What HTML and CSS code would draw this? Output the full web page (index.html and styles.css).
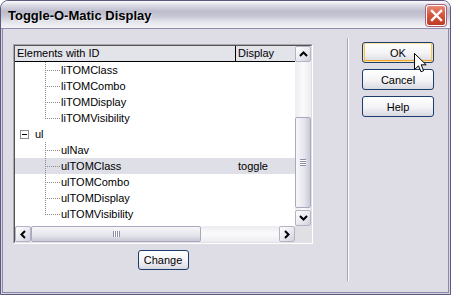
FILE: index.html
```html
<!DOCTYPE html>
<html lang="en">
<head>
    <meta charset="UTF-8">
    <title>Toggle-O-Matic Display</title>
    <link rel="stylesheet" href="styles.css">
</head>
<body>
    <div class="window">
        <div class="titlebar">
            <span class="title">Toggle-O-Matic Display</span>
            <div class="close">
                <svg width="13" height="13" viewBox="0 0 13 13"><path d="M2 2 L11 11 M11 2 L2 11" stroke="#fff" stroke-width="2.4" stroke-linecap="square"/></svg>
            </div>
        </div>
        <div class="client">
            <div class="main">
                <div class="listbox">
                    <div class="inner">
                        <div class="view">
                            <div class="header">
                                <div class="col-name">Elements with ID</div>
                                <div class="col-display">Display</div>
                            </div>
                            <div class="row"><div class="name"><span class="twig"></span>liTOMClass</div><div class="value"></div></div>
                            <div class="row"><div class="name"><span class="twig"></span>liTOMCombo</div><div class="value"></div></div>
                            <div class="row"><div class="name"><span class="twig"></span>liTOMDisplay</div><div class="value"></div></div>
                            <div class="row"><div class="name"><span class="twig last"></span>liTOMVisibility</div><div class="value"></div></div>
                            <div class="row"><div class="name"><span class="expander"><span class="minus"></span></span>ul</div><div class="value"></div></div>
                            <div class="row"><div class="name"><span class="twig"></span>ulNav</div><div class="value"></div></div>
                            <div class="row selected"><div class="name"><span class="twig"></span>ulTOMClass</div><div class="value">toggle</div></div>
                            <div class="row"><div class="name"><span class="twig"></span>ulTOMCombo</div><div class="value"></div></div>
                            <div class="row"><div class="name"><span class="twig"></span>ulTOMDisplay</div><div class="value"></div></div>
                            <div class="row"><div class="name"><span class="twig last"></span>ulTOMVisibility</div><div class="value"></div></div>
                        </div>
                        <div class="vscroll">
                            <div class="arrow"><svg width="9" height="6" viewBox="0 0 9 6"><path d="M1 5 L4.5 1.5 L8 5" fill="none" stroke="#000" stroke-width="2"/></svg></div>
                            <div class="vtrack">
                                <div class="vthumb"><span class="grip"></span></div>
                            </div>
                            <div class="arrow"><svg width="9" height="6" viewBox="0 0 9 6"><path d="M1 1 L4.5 4.5 L8 1" fill="none" stroke="#000" stroke-width="2"/></svg></div>
                        </div>
                        <div class="hscroll">
                            <div class="arrow"><svg width="6" height="9" viewBox="0 0 6 9"><path d="M5 1 L1.5 4.5 L5 8" fill="none" stroke="#000" stroke-width="2"/></svg></div>
                            <div class="hthumb"><span class="grip"></span></div>
                            <div class="arrow right"><svg width="6" height="9" viewBox="0 0 6 9"><path d="M1 1 L4.5 4.5 L1 8" fill="none" stroke="#000" stroke-width="2"/></svg></div>
                        </div>
                        <div class="corner"></div>
                    </div>
                </div>
                <button class="btn change">Change</button>
            </div>
            <div class="sep"></div>
            <div class="actions">
                <button class="btn hot">OK</button>
                <button class="btn">Cancel</button>
                <button class="btn">Help</button>
            </div>
        </div>
        <svg class="cursor" width="14" height="21" viewBox="0 0 14 21"><path d="M0.5 0.5 L0.5 16.5 L4.5 12.8 L7 18.8 L9.6 17.7 L7.2 11.8 L12.2 11.8 Z" fill="#fff" stroke="#000" stroke-width="1"/></svg>
    </div>
</body>
</html>
```

FILE: styles.css
```css
* {
    box-sizing: border-box;
}
body {
    margin: 0;
    font-family: "Liberation Sans", Arial, sans-serif;
    font-size: 11px;
    color: #000;
    background: #fff;
}
.window {
    position: relative;
    width: 451px;
    height: 295px;
    display: flex;
    flex-direction: column;
    border: 1px solid #5b5a7e;
    border-radius: 8px 8px 0 0;
    background: #d6d6e2;
    overflow: hidden;
}
.titlebar {
    height: 28px;
    flex-shrink: 0;
    display: flex;
    align-items: center;
    justify-content: space-between;
    padding: 2px 4px 0 7px;
    border-bottom: 1px solid #8d8cab;
    background: linear-gradient(#fbfbfd 0%, #e2e2ea 12%, #bcbccd 38%, #c6c6d4 55%, #e4e4ec 78%, #f4f4f7 100%);
}
.title {
    font-weight: bold;
    font-size: 13px;
    color: #000;
    text-shadow: 1px 1px 0 rgba(255, 255, 255, 0.5);
}
.close {
    width: 20px;
    height: 21px;
    display: flex;
    align-items: center;
    justify-content: center;
    border: 1px solid #fff;
    border-radius: 3px;
    background: linear-gradient(#e98a76, #d4533b 50%, #c03a24);
    box-shadow: 0 0 0 1px #a9607a;
}
.client {
    flex: 1;
    display: flex;
    margin: 0 1px 1px;
    border: 1px solid #8a89a8;
    border-top: none;
    background: #dedde5;
}
.main {
    display: flex;
    flex-direction: column;
    align-items: center;
    padding: 15px 0 0 10px;
}
.listbox {
    width: 300px;
    height: 200px;
    border: 1px solid;
    border-color: #a7a6aa #fff #fff #a7a6aa;
}
.inner {
    height: 100%;
    display: grid;
    grid-template-columns: 1fr 16px;
    grid-template-rows: 1fr 16px;
    border: 1px solid;
    border-color: #555 #e0dfe3 #e0dfe3 #555;
    background: #fff;
}
.view {
    overflow: hidden;
}
.header {
    display: grid;
    grid-template-columns: 221px 1fr;
    height: 16px;
    border-bottom: 1px solid #000;
    background: #e3e3ea;
}
.header div {
    padding-left: 2px;
    line-height: 15px;
}
.header .col-name {
    border-right: 1px solid #000;
}
.row {
    display: grid;
    grid-template-columns: 221px 1fr;
    height: 16px;
    align-items: center;
}
.row.selected {
    background: #dfdfe7;
}
.row .name {
    display: flex;
    align-items: center;
    height: 16px;
}
.row .value {
    padding-left: 2px;
}
.twig {
    width: 15px;
    height: 16px;
    margin-left: 30px;
    margin-right: 1px;
    background:
        repeating-linear-gradient(to bottom, #8a8a8a 0 1px, transparent 1px 2px) 0 0 / 1px 100% no-repeat,
        repeating-linear-gradient(to right, #8a8a8a 0 1px, transparent 1px 2px) 2px 8px / 13px 1px no-repeat;
}
.twig.last {
    background:
        repeating-linear-gradient(to bottom, #8a8a8a 0 1px, transparent 1px 2px) 0 0 / 1px 9px no-repeat,
        repeating-linear-gradient(to right, #8a8a8a 0 1px, transparent 1px 2px) 2px 8px / 13px 1px no-repeat;
}
.expander {
    width: 9px;
    height: 9px;
    margin-left: 5px;
    margin-right: 6px;
    display: flex;
    align-items: center;
    justify-content: center;
    border: 1px solid #8c8c8c;
    background: #fff;
}
.minus {
    width: 5px;
    height: 1px;
    background: #000;
}
.vscroll {
    display: flex;
    flex-direction: column;
    background: linear-gradient(to right, #ececf1, #fbfbfc 50%, #ececf1);
}
.vtrack {
    flex: 1;
}
.arrow {
    width: 16px;
    height: 16px;
    flex-shrink: 0;
    display: flex;
    align-items: center;
    justify-content: center;
    border: 1px solid #b3b3c4;
    border-radius: 2px;
    background: linear-gradient(135deg, #ffffff, #e6e6ee 60%, #cfcfdc);
}
.vthumb {
    height: 91px;
    margin-top: 55px;
    display: flex;
    align-items: center;
    justify-content: center;
    border: 1px solid #a9a9bd;
    border-radius: 2px;
    background: linear-gradient(to right, #f7f7fa, #e4e4ec 60%, #c9c9d7);
}
.vthumb .grip {
    width: 6px;
    height: 7px;
    background: repeating-linear-gradient(to bottom, #8d8da3 0 1px, #fff 1px 2px);
}
.hscroll {
    display: flex;
    background: linear-gradient(#ececf1, #fbfbfc 50%, #ececf1);
}
.hthumb {
    width: 170px;
    display: flex;
    align-items: center;
    justify-content: center;
    border: 1px solid #a9a9bd;
    border-radius: 2px;
    background: linear-gradient(#f7f7fa, #e4e4ec 60%, #c9c9d7);
}
.hthumb .grip {
    width: 7px;
    height: 6px;
    background: repeating-linear-gradient(to right, #8d8da3 0 1px, #fff 1px 2px);
}
.arrow.right {
    margin-left: auto;
}
.corner {
    background: #e0dfe3;
}
.btn {
    font-family: "Liberation Sans", Arial, sans-serif;
    font-size: 11px;
    color: #000;
    padding: 0;
    border: 1px solid #1c3d6b;
    border-radius: 3px;
    background: linear-gradient(#ffffff, #f3f3f6 55%, #d8d8e2);
}
.change {
    width: 51px;
    height: 20px;
    margin-top: 6px;
}
.sep {
    width: 2px;
    margin: 9px 0 11px 34px;
    border-left: 1px solid #a7a6aa;
    border-right: 1px solid #fff;
}
.actions {
    display: flex;
    flex-direction: column;
    gap: 6px;
    padding-top: 13px;
    margin-left: 13px;
}
.actions .btn {
    width: 72px;
    height: 21px;
}
.btn.hot {
    box-shadow: inset 0 0 0 1px #ffe3a0, inset 0 -2px 0 #f0a531, inset 2px 0 0 #f8c45c, inset -2px 0 0 #f8c45c;
}
.cursor {
    position: absolute;
    left: 413px;
    top: 52px;
}
```
